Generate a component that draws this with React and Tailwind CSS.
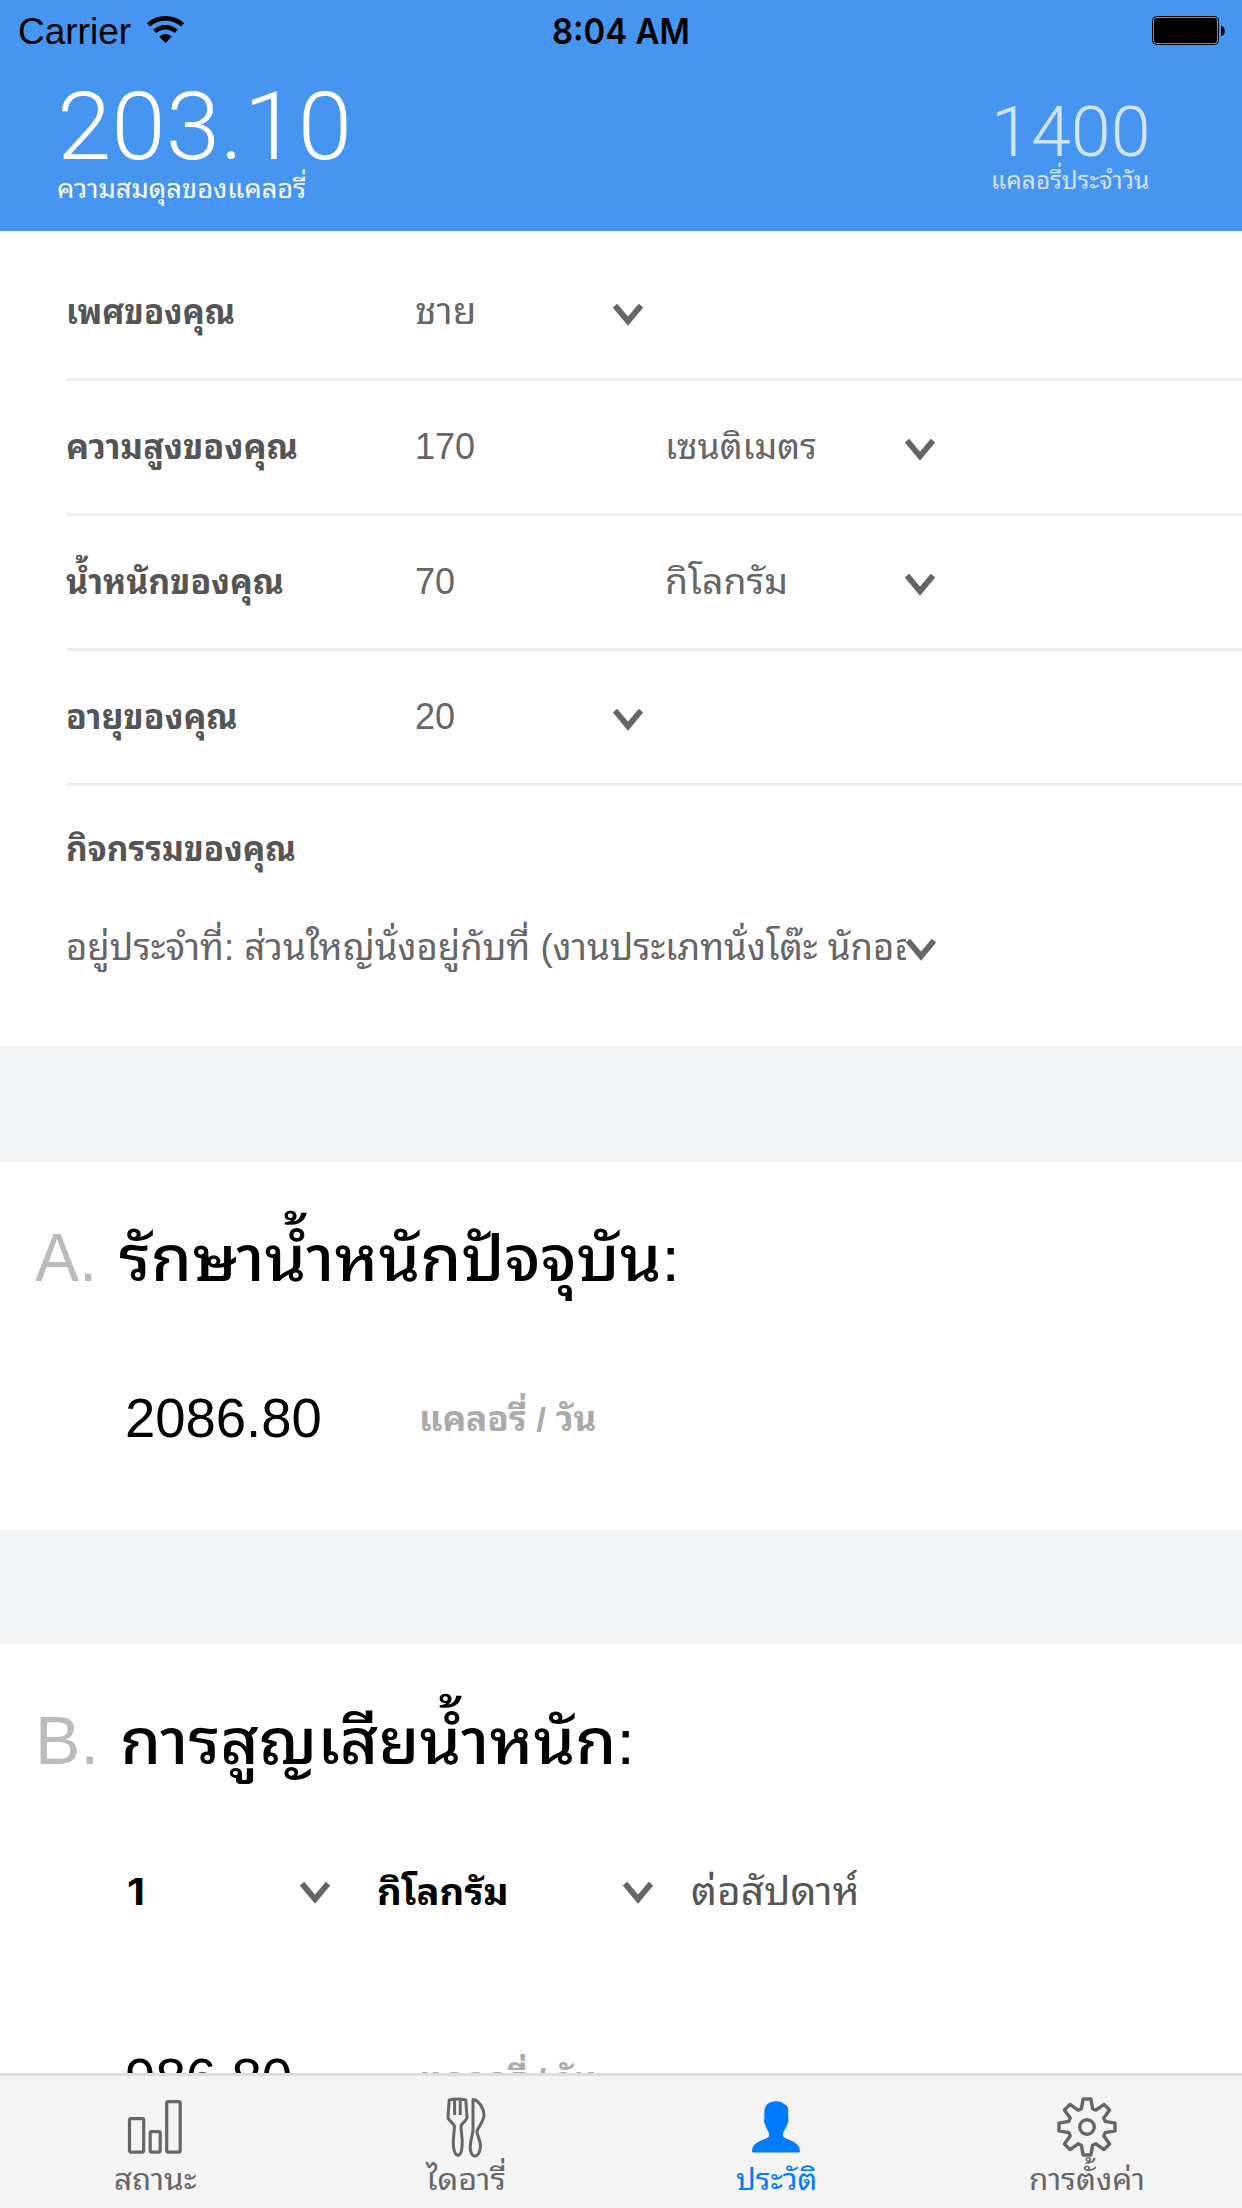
import React, { useLayoutEffect, useRef, useState } from "react";

/* Single line of text condensed or widened to fill its column exactly. */
function Fit({ w, className = "", children }) {
  const ref = useRef(null);
  const [s, setS] = useState(1);
  useLayoutEffect(() => {
    setS(w / ref.current.offsetWidth);
  }, [w, children]);
  return (
    <span className={`shrink-0 block whitespace-nowrap ${className}`} style={{ width: w }}>
      <span ref={ref} className="inline-block origin-left" style={{ transform: `scaleX(${s})` }}>
        {children}
      </span>
    </span>
  );
}

/* Sets the shared baseline of a row, measured from the row's top. */
const Strut = ({ className }) => <i className={`block w-0 shrink-0 ${className}`} />;

function Chevron({ className = "" }) {
  return (
    <svg viewBox="0 0 30 24" className={`h-[24px] w-[30px] shrink-0 ${className}`} fill="none" stroke="#666" strokeWidth="5.8">
      <path d="M2 2.6 15 18.2 28 2.6" />
    </svg>
  );
}

function Row({ label, lw, value, vw, unit, uw, first }) {
  return (
    <div className={`ml-[66px] flex items-baseline overflow-hidden border-b-[3px] border-[#eee] ${first ? "h-[150px]" : "h-[135px]"}`}>
      <Strut className={first ? "h-[93px]" : "h-[78px]"} />
      <div className="w-[349px] shrink-0">
        <Fit w={lw} className="text-[34px] font-bold text-[#555]">{label}</Fit>
      </div>
      <div className={`shrink-0 ${unit ? "w-[250px]" : "w-[198px]"}`}>
        <Fit w={vw} className="text-[36px] text-[#666]">{value}</Fit>
      </div>
      {unit && (
        <div className="w-[240px] shrink-0">
          <Fit w={uw} className="text-[35px] text-[#666]">{unit}</Fit>
        </div>
      )}
      <Chevron className="translate-y-[3px]" />
    </div>
  );
}

function Tab({ icon, label, w, active }) {
  return (
    <div className={`flex flex-1 flex-col items-center ${active ? "text-[#007aff]" : "text-[#666]"}`}>
      <div className="h-[66px] pt-[15px]">{icon}</div>
      <div className="flex h-[60px] items-baseline">
        <Strut className="h-[48px]" />
        <Fit w={w} className="text-[30px]">{label}</Fit>
      </div>
    </div>
  );
}

const gear = (() => {
  const pts = [];
  for (let i = 0; i < 8; i++) {
    const a = (i * Math.PI) / 4 - Math.PI / 2;
    [[-0.3, 19], [-0.14, 28.3], [0.14, 28.3], [0.3, 19]].forEach(([d, r]) => {
      const x = 31 + r * Math.cos(a + d);
      const y = 31 + r * Math.sin(a + d);
      pts.push(`${x.toFixed(1)} ${y.toFixed(1)}`);
    });
  }
  return `M${pts.join("L")}Z`;
})();

export default function App() {
  return (
    <div className="flex h-[2208px] w-[1242px] flex-col overflow-hidden bg-white font-['Liberation_Sans','Noto_Sans_Thai_Looped','Loma','Garuda','Noto_Sans_Thai',sans-serif] leading-none text-black">
      <header className="h-[231px] shrink-0 bg-[#4595f1]">
        <div className="flex h-[60px] items-baseline">
          <Strut className="h-[44px]" />
          <div className="w-[147px] shrink-0 pl-[18px]">
            <Fit w={113} className="text-[37px]">Carrier</Fit>
          </div>
          <svg viewBox="0 0 37 28" className="h-[28px] w-[37px] shrink-0" fill="none" stroke="#000" strokeWidth="4.6">
            <path d="M1.5 8.8C11 .2 26 .2 35.5 8.8" />
            <path d="M7.8 15.4C13.8 9.8 23.2 9.8 29.2 15.4" />
            <path d="M12.3 20.8C16 17 21 17 24.7 20.8L18.5 27Z" fill="#000" stroke="none" />
          </svg>
          <div className="w-[967px] pl-[368px]">
            <Fit w={138} className="font-['Inter',sans-serif] text-[36px] font-semibold">8:04 AM</Fit>
          </div>
          <svg viewBox="0 0 74 30" className="h-[30px] w-[74px] shrink-0 translate-y-[2px]">
            <rect x="1.5" y=".5" width="66" height="28" rx="4" fill="none" stroke="#000" />
            <rect x="3" y="2" width="63" height="25" rx="3" />
            <path d="M70 10c5 0 5 10 0 10z" />
          </svg>
        </div>
        <div className="flex justify-between pl-[57px] pr-[91px] text-white">
          <div>
            <div className="flex h-[105px] items-baseline font-['Roboto',sans-serif]">
              <Strut className="h-[99px]" />
              <Fit w={295} className="text-[95px] font-light">203.10</Fit>
            </div>
            <div className="flex items-baseline">
              <Strut className="h-[33px]" />
              <Fit w={249} className="text-[27px]">ความสมดุลของแคลอรี่</Fit>
            </div>
          </div>
          <div className="text-white/75">
            <div className="flex h-[105px] items-baseline font-['Roboto',sans-serif]">
              <Strut className="h-[96px]" />
              <Fit w={160} className="text-[71px] font-light">1400</Fit>
            </div>
            <div className="flex items-baseline">
              <Strut className="h-[24px]" />
              <Fit w={158} className="text-[25px]">แคลอรี่ประจำวัน</Fit>
            </div>
          </div>
        </div>
      </header>

      <main className="flex min-h-0 flex-1 flex-col overflow-hidden">
        <section className="h-[816px] shrink-0">
          <Row first label="เพศของคุณ" lw={169} value="ชาย" vw={61} />
          <Row label="ความสูงของคุณ" lw={232} value="170" vw={60} unit="เซนติเมตร" uw={152} />
          <Row label="น้ำหนักของคุณ" lw={218} value="70" vw={40} unit="กิโลกรัม" uw={123} />
          <Row label="อายุของคุณ" lw={172} value="20" vw={40} />
          <div className="flex h-[99px] items-baseline pl-[66px]">
            <Strut className="h-[75px]" />
            <Fit w={230} className="text-[34px] font-bold text-[#555]">กิจกรรมของคุณ</Fit>
          </div>
          <div className="flex h-[110px] items-baseline pl-[66px]">
            <Strut className="h-[75px]" />
            <div className="w-[840px] overflow-x-clip">
              <Fit w={872} className="text-[36px] text-[#666]">อยู่ประจำที่: ส่วนใหญ่นั่งอยู่กับที่ (งานประเภทนั่งโต๊ะ นักออก</Fit>
            </div>
            <Chevron className="translate-y-[2px]" />
          </div>
        </section>

        <div className="h-[114px] shrink-0 bg-[#f2f3f5]" />

        <section className="h-[369px] shrink-0">
          <div className="flex h-[160px] items-baseline">
            <Strut className="h-[120px]" />
            <div className="w-[119px] pl-[35px]">
              <Fit w={62} className="text-[68px] text-[#bbb]">A.</Fit>
            </div>
            <Fit w={561} className="text-[63px] font-medium">รักษาน้ำหนักปัจจุบัน:</Fit>
          </div>
          <div className="flex items-baseline pl-[125px]">
            <Strut className="h-[116px]" />
            <div className="w-[294px]">
              <Fit w={197} className="text-[55px]">2086.80</Fit>
            </div>
            <Fit w={178} className="translate-y-[-6px] text-[34px] font-bold text-[#aaa]">แคลอรี่ / วัน</Fit>
          </div>
        </section>

        <div className="h-[114px] shrink-0 bg-[#f2f3f5]" />

        <section className="shrink-0">
          <div className="flex h-[160px] items-baseline">
            <Strut className="h-[120px]" />
            <div className="w-[120px] pl-[35px]">
              <Fit w={64} className="text-[68px] text-[#bbb]">B.</Fit>
            </div>
            <Fit w={515} className="text-[63px] font-medium">การสูญเสียน้ำหนัก:</Fit>
          </div>
          <div className="flex h-[160px] items-baseline pl-[125px]">
            <Strut className="h-[101px]" />
            <div className="w-[175px] pl-[2px]">
              <Fit w={18} className="font-['Inter',sans-serif] text-[37px] font-bold">1</Fit>
            </div>
            <Chevron />
            <div className="w-[293px] pl-[47px]">
              <Fit w={132} className="text-[37px] font-bold">กิโลกรัม</Fit>
            </div>
            <Chevron />
            <Fit w={169} className="ml-[38px] text-[39px] text-[#555]">ต่อสัปดาห์</Fit>
          </div>
          <div className="flex items-baseline pl-[125px]">
            <Strut className="h-[133px]" />
            <div className="w-[294px]">
              <Fit w={167} className="text-[55px]">986.80</Fit>
            </div>
            <Fit w={178} className="translate-y-[-5px] text-[34px] font-bold text-[#aaa]">แคลอรี่ / วัน</Fit>
          </div>
        </section>
      </main>

      <nav className="flex h-[135px] shrink-0 border-t-[3px] border-[#ddd] bg-[#f4f4f4]">
        <Tab
          label="สถานะ"
          w={83}
          icon={
            <svg viewBox="0 0 56 64" className="h-[64px] w-[56px]" fill="none" stroke="#666" strokeWidth="3.2">
              <rect x="2.5" y="27.6" width="14.2" height="33.5" rx="1.5" />
              <rect x="23.2" y="40.6" width="10" height="20.5" rx="1.5" />
              <rect x="39.7" y="10.6" width="13.5" height="50.5" rx="1.5" />
            </svg>
          }
        />
        <Tab
          label="ไดอารี่"
          w={80}
          icon={
            <svg viewBox="0 0 40 62" className="mt-[5px] h-[62px] w-[40px]" fill="none" stroke="#666" strokeWidth="3" strokeLinejoin="round">
              <path d="M3.2 4C8 2.7 15 2.7 19.8 4L21 21C21 25 15.2 27 15 30.5C15 36 17 42 16 51C15 62 9 62 7.5 51C6.5 42 8.5 36 8.5 30.5C8 27 2 25 2 21ZM8.6 4V19M14.2 4V19" />
              <path d="M27 3.5C33 4 38 13 38 19C38 26 31 32 31 36C31 40 35 44 34.5 51C33.5 63 24 63 24.2 51C24.5 43 27 38 27 34Z" />
            </svg>
          }
        />
        <Tab
          active
          label="ประวัติ"
          w={81}
          icon={
            <svg viewBox="0 0 48 52" className="mt-[10px] h-[52px] w-[48px]" fill="#007aff">
              <path d="M24 .3C28 .3 31 1.5 32 3.3C35.500 4 36.5 7 36.3 11L36.2 17C37 19 36.2 22 35 24C34 28 31 30 31 33V35C32 39 47.5 39 48 50Q48 51.5 46.5 51.5H1.5Q0 51.5 0 50C.5 39 16 39 17 35V33C17 30 14 28 13.5 24C12 22 11.5 19 12.5 17L12.3 11C12.5 4 17 .3 24 .3Z" />
            </svg>
          }
        />
        <Tab
          label="การตั้งค่า"
          w={116}
          icon={
            <svg viewBox="0 0 62 62" className="mt-[5px] h-[62px] w-[62px]" fill="none" stroke="#666" strokeWidth="3.4" strokeLinejoin="round">
              <path d={gear} />
              <circle cx="31" cy="31" r="7.3" />
            </svg>
          }
        />
      </nav>
    </div>
  );
}
